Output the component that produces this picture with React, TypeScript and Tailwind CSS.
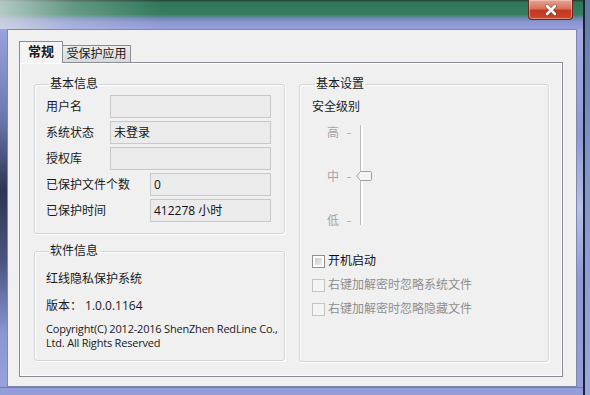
import React from "react";

function CloseButton() {
  return (
    <div className="flex h-[20px] w-[45px] items-center justify-center rounded-b-[4px] border border-t-0 border-[#6e2418] bg-[linear-gradient(180deg,#e7a596_0%,#d9705c_45%,#c3381f_55%,#c9482f_100%)] shadow-[inset_0_0_0_1px_rgba(255,220,210,0.45)]">
      <svg width="14" height="12" viewBox="0 0 14 12">
        <path d="M3 2 L11 10 M11 2 L3 10" stroke="#5a1a10" strokeWidth="4" strokeLinecap="round" opacity="0.45" />
        <path d="M3 2 L11 10 M11 2 L3 10" stroke="#ffffff" strokeWidth="2.6" strokeLinecap="round" />
      </svg>
    </div>
  );
}

function TextBox({ value }: { value?: string }) {
  return (
    <div className="flex h-[23px] flex-1 items-center border border-[#c8c8c8] bg-[#ebebeb] pl-[3px] text-[12px] text-[#111]">
      {value}
    </div>
  );
}

function Row({ label, labelWidth, value }: { label: string; labelWidth: string; value?: string }) {
  return (
    <div className="flex items-center">
      <div className={labelWidth}>{label}</div>
      <TextBox value={value} />
    </div>
  );
}

function GroupBox({ title, className, children }: { title: string; className: string; children?: React.ReactNode }) {
  return (
    <fieldset className={`rounded-[3px] border border-[#d2d6da] shadow-[inset_1px_1px_0_#fff,1px_1px_0_#fff] ${className}`}>
      <legend className="ml-[3px] px-px text-[12px] leading-[16px] text-[#1a1a1a]">{title}</legend>
      {children}
    </fieldset>
  );
}

function Checkbox({ label, disabled }: { label: string; disabled?: boolean }) {
  return (
    <div className="flex h-[16px] items-center gap-[3px] leading-[16px]">
      {disabled ? (
        <div className="h-[13px] w-[13px] border border-[#c4c4c4] bg-[#f4f4f4]" />
      ) : (
        <div className="h-[13px] w-[13px] border border-[#8e8f8f] bg-white p-[2px]">
          <div className="h-full w-full bg-[linear-gradient(135deg,#cbcbcb,#ececec)]" />
        </div>
      )}
      <span className={disabled ? "text-[#8f8f8f]" : "text-[#111]"}>{label}</span>
    </div>
  );
}

function LevelSlider() {
  const levels = ["高", "中", "低"];
  return (
    <div className="ml-[15px] mt-[10px] flex items-start">
      <div className="flex h-[103px] flex-col justify-between pt-[1px] text-[12px] text-[#a5a5a5]">
        {levels.map((l) => (
          <div key={l} className="flex h-[14px] items-center">
            <span>{l}</span>
            <span className="ml-[8px] h-px w-[4px] bg-[#b5b5b5]" />
          </div>
        ))}
      </div>
      <div className="relative ml-[9px] h-[100px] w-[3px] border-l border-[#b9b9b9] bg-white">
        <svg className="absolute left-[-6px] top-[45px]" width="18" height="12" viewBox="0 0 18 12">
          <path d="M1.5 6 L5.5 1.5 H15.5 Q16.5 1.5 16.5 2.5 V9.5 Q16.5 10.5 15.5 10.5 H5.5 Z" fill="#f4f4f4" stroke="#9d9d9d" strokeWidth="1" />
        </svg>
      </div>
    </div>
  );
}

export default function App() {
  return (
    <div className="flex h-[395px] w-[590px] overflow-hidden font-['Open_Sans','Noto_Sans_CJK_SC',sans-serif] text-[12px] text-[#1a1a1a]">
      <div className="flex w-[583px] flex-col">
        <div className="flex h-[29px] items-start justify-end bg-[linear-gradient(90deg,rgba(222,228,232,0.75)_0%,rgba(222,228,232,0.3)_12%,rgba(222,228,232,0)_28%),linear-gradient(180deg,#233c32_0%,#2e7658_8%,#367e5f_50%,#6f8ab4_64%,#8b95d2_76%,#969fdb_100%)] pr-[10px]">
          <CloseButton />
        </div>
        <div className="flex flex-1">
          <div className="w-[7px] bg-[linear-gradient(180deg,#99a2dc_0%,#6c77b0_25%,#2c3552_45%,#4a557f_65%,#8a95d3_85%,#98a1dc_100%)]" />
          <div className="flex w-[570px] flex-col border border-[#7d87b0] bg-[#f0f0f0] pb-[9px] pl-[11px] pr-[13px] pt-[11px]">
            <div className="flex items-end">
              <div className="relative z-10 -mb-px flex h-[22px] w-[44px] items-center justify-center border border-b-0 border-[#898c95] bg-[#f4f4f4] pb-[1px] text-[13px] font-semibold">
                常规
              </div>
              <div className="flex h-[17px] w-[68px] items-center justify-center border border-b-0 border-l-0 border-[#898c95] bg-[linear-gradient(180deg,#ececec,#d9d9d9)] text-[12px]">
                受保护应用
              </div>
            </div>
            <div className="flex flex-1 gap-[14px] border border-[#898c95] pl-[14px] pr-[13px] pt-[13px] shadow-[inset_1px_1px_0_#fff,inset_-1px_-1px_0_#fff]">
              <div className="flex w-[251px] flex-col gap-[9px]">
                <GroupBox title="基本信息" className="h-[158px] pl-[11px] pr-[13px]">
                  <div className="mt-[3px] flex flex-col gap-[3px]">
                    <Row label="用户名" labelWidth="w-[64px]" />
                    <Row label="系统状态" labelWidth="w-[64px]" value="未登录" />
                    <Row label="授权库" labelWidth="w-[64px]" />
                    <Row label="已保护文件个数" labelWidth="w-[104px]" value="0" />
                    <Row label="已保护时间" labelWidth="w-[104px]" value="412278 小时" />
                  </div>
                </GroupBox>
                <GroupBox title="软件信息" className="h-[118px] pl-[11px]">
                  <div className="mt-[12px] leading-[16px]">红线隐私保护系统</div>
                  <div className="mt-[11px] leading-[16px]">
                    版本：<span className="ml-[3px]">1.0.0.1164</span>
                  </div>
                  <div className="mt-[8px] text-[11px] leading-[14px] tracking-[-0.2px]">
                    Copyright(C) 2012-2016 ShenZhen RedLine Co.,
                    <br />
                    Ltd. All Rights Reserved
                  </div>
                </GroupBox>
              </div>
              <GroupBox title="基本设置" className="h-[286px] flex-1 pl-[12px]">
                <div className="mt-[7px] leading-[16px]">安全级别</div>
                <LevelSlider />
                <div className="mt-[25px] flex flex-col gap-[8px]">
                  <Checkbox label="开机启动" />
                  <Checkbox label="右键加解密时忽略系统文件" disabled />
                  <Checkbox label="右键加解密时忽略隐藏文件" disabled />
                </div>
              </GroupBox>
            </div>
          </div>
          <div className="w-[6px] bg-[linear-gradient(180deg,#a4abe0_0%,#8e99d4_30%,#b7c0e8_50%,#8e99d4_70%,#939dd8_100%)]" />
        </div>
        <div className="h-[8px] border-t border-[#6f7bb6] bg-[#939dd8]" />
      </div>
      <div className="w-[2px] bg-[#1d2233]" />
      <div className="flex-1 bg-[linear-gradient(180deg,#5f7aa8_0%,#7f95c8_40%,#9aa8dc_100%)]" />
    </div>
  );
}
